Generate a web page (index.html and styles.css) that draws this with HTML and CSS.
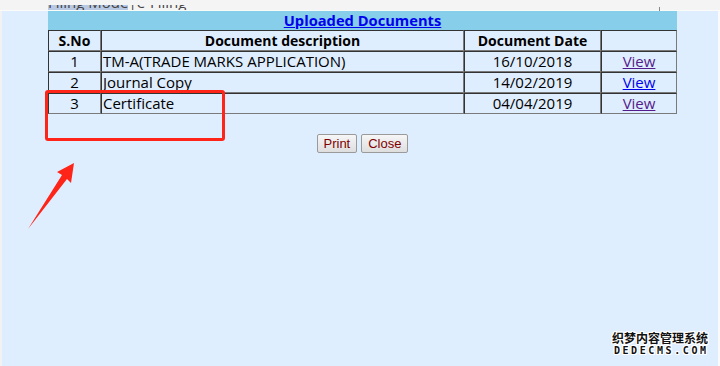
FILE: index.html
```html
<!DOCTYPE html>
<html>
<head>
<meta charset="utf-8">
<title>Uploaded Documents</title>
<link rel="stylesheet" href="styles.css">
</head>
<body>
<div class="topbar"><div class="clip"><span class="prev"><span class="sel">Filing Mode</span>|e-Filing</span></div><span class="tick"></span></div>
<div class="page">
  <table class="docs">
    <colgroup>
      <col class="c1">
      <col class="c2">
      <col class="c3">
      <col class="c4">
    </colgroup>
    <tr><th colspan="4" class="caption"><a href="#">Uploaded Documents</a></th></tr>
    <tr class="head">
      <td>S.No</td>
      <td>Document description</td>
      <td>Document Date</td>
      <td></td>
    </tr>
    <tr>
      <td>1</td>
      <td class="left">TM-A(TRADE MARKS APPLICATION)</td>
      <td>16/10/2018</td>
      <td><a class="visited" href="#">View</a></td>
    </tr>
    <tr>
      <td>2</td>
      <td class="left">Journal Copy</td>
      <td>14/02/2019</td>
      <td><a href="#">View</a></td>
    </tr>
    <tr>
      <td>3</td>
      <td class="left">Certificate</td>
      <td>04/04/2019</td>
      <td><a class="visited" href="#">View</a></td>
    </tr>
  </table>
  <div class="buttons">
    <button class="btn">Print</button>
    <button class="btn">Close</button>
  </div>
</div>
<div class="markbox"></div>
<svg class="arrow" width="720" height="366" viewBox="0 0 720 366">
  <polygon points="28,229 62,175 57,172 74,163 71,183 67,179" fill="#ff2418"/>
</svg>
<div class="watermark">
  <div class="wm-cn">织梦内容管理系统</div>
  <div class="wm-en">DEDECMS.COM</div>
</div>
</body>
</html>
```
FILE: styles.css
```css
html, body {
  margin: 0;
  padding: 0;
}
body {
  width: 720px;
  height: 366px;
  overflow: hidden;
  background: #dfeefe;
  font-family: "Open Sans", "Noto Sans", sans-serif;
  font-size: 14px;
  color: #000;
  position: relative;
}
.topbar {
  height: 10px;
  background: #f4f4f4;
  position: relative;
  border-bottom: 1px solid #f8fbf8;
}
.clip {
  position: relative;
  top: 5px;
  height: 5px;
  overflow: hidden;
}
.prev {
  display: block;
  margin-left: 48px;
  margin-top: -11px;
  font-size: 15px;
  line-height: 16px;
  color: #444;
}
.sel {
  background: #b9c9e4;
}
.tick {
  position: absolute;
  left: 659px;
  top: 7px;
  width: 1px;
  height: 4px;
  background: #888;
}
.page {
  border-left: 2px solid #f2f2f2;
  border-right: 2px solid #fafafa;
  padding-left: 46px;
  height: 355px;
}
.docs {
  width: 629px;
  border-collapse: separate;
  border-spacing: 0;
  table-layout: fixed;
}
col.c1 { width: 53px; }
col.c2 { width: 363px; }
col.c3 { width: 137px; }
col.c4 { width: 76px; }
.caption {
  background: #87ceeb;
  height: 19px;
  padding: 0;
  font-size: 14.7px;
  font-weight: bold;
  line-height: 19px;
  text-align: center;
}
.caption a {
  color: #000080;
}
.docs td {
  height: 19px;
  padding: 0 1px;
  font-size: 15px;
  line-height: 19px;
  text-align: center;
  border-top: 1px solid #333;
  border-left: 1px solid #333;
  border-right: 1px solid #7a7a7a;
  border-bottom: 1px solid #7a7a7a;
  white-space: nowrap;
  overflow: hidden;
}
.docs td.left {
  text-align: left;
}
.head td {
  font-size: 14px;
  font-weight: bold;
}
.docs a {
  color: #0000ee;
}
.docs a.visited {
  color: #551a8b;
}
.buttons {
  width: 629px;
  display: flex;
  justify-content: center;
  gap: 4px;
  margin-top: 20px;
}
.btn {
  height: 19px;
  padding: 0 6px;
  font-family: "Liberation Sans", Arial, sans-serif;
  font-size: 13px;
  color: #800000;
  background: linear-gradient(#f6f6f6, #dedede);
  border: 1px solid #9a9a9a;
  border-radius: 2px;
  line-height: 17px;
}
.markbox {
  position: absolute;
  left: 45px;
  top: 90px;
  width: 174px;
  height: 45px;
  border: 3px solid #ff2418;
  border-radius: 3px;
}
.arrow {
  position: absolute;
  left: 0;
  top: 0;
}
.watermark {
  position: absolute;
  left: 610px;
  top: 331px;
  width: 100px;
  text-align: center;
  color: #111;
  text-shadow: 1px 0 0 #fff, -1px 0 0 #fff, 0 1px 0 #fff, 0 -1px 0 #fff, 1px 1px 0 #fff, -1px -1px 0 #fff, 1px -1px 0 #fff, -1px 1px 0 #fff;
}
.wm-cn {
  font-family: "Noto Sans CJK SC", sans-serif;
  font-size: 12px;
  font-weight: bold;
  line-height: 14px;
}
.wm-en {
  font-family: "DejaVu Sans Mono", monospace;
  font-size: 10px;
  font-weight: bold;
  letter-spacing: 2.6px;
  margin-right: -2.6px;
  line-height: 12px;
}
```
